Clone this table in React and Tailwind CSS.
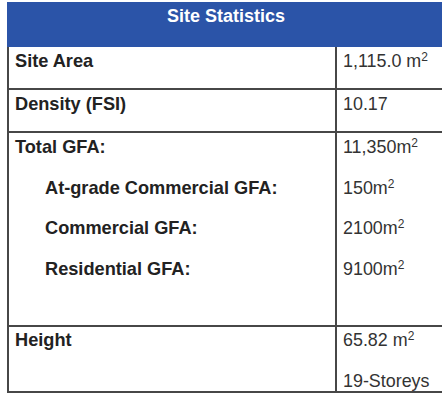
import React from 'react';

const M2 = ({ space }) => (
  <>
    {space ? ' ' : ''}m<sup className="text-[12px]">2</sup>
  </>
);

function Line({ children, bold, indent, last }) {
  return (
    <p
      className={
        'leading-[24.5px] whitespace-nowrap ' +
        (last ? '' : 'mb-[16px] ') +
        (bold ? 'font-bold text-[18.2px] text-[#222] ' : 'text-[17.9px] text-[#333] ') +
        (indent ? 'pl-[30px]' : '')
      }
    >
      {children}
    </p>
  );
}

function Row({ height, pt, left, right }) {
  return (
    <div className={'flex border-b-2 border-[#474747] ' + height}>
      <div className={'w-[326px] pl-[6px] ' + pt}>{left}</div>
      <div className={'flex-1 border-l-2 border-[#474747] pl-[6px] ' + pt}>{right}</div>
    </div>
  );
}

export default function App() {
  return (
    <div className="w-[442px] h-[401px] overflow-hidden bg-white font-['Liberation_Sans',Arial,sans-serif]">
      <div className="ml-[7px] mt-[2px] w-[438px]">
        {/* Header */}
        <div className="h-[45px] bg-[#2b54a8] pt-[2px] text-center text-[18px] font-bold text-white leading-[24.5px]">
          Site Statistics
        </div>

        {/* Body */}
        <div className="border-l-2 border-[#474747]">
          <Row
            height="h-[43px]"
            pt="pt-[2px]"
            left={<Line bold last>Site Area</Line>}
            right={<Line last>1,115.0<M2 space /></Line>}
          />
          <Row
            height="h-[43px]"
            pt="pt-[2px]"
            left={<Line bold last>Density (FSI)</Line>}
            right={<Line last>10.17</Line>}
          />
          <Row
            height="h-[194px]"
            pt="pt-[2px]"
            left={
              <>
                <Line bold>Total GFA:</Line>
                <Line bold indent>At-grade Commercial GFA:</Line>
                <Line bold indent>Commercial GFA:</Line>
                <Line bold indent last>Residential GFA:</Line>
              </>
            }
            right={
              <>
                <Line>11,350<M2 /></Line>
                <Line>150<M2 /></Line>
                <Line>2100<M2 /></Line>
                <Line last>9100<M2 /></Line>
              </>
            }
          />
          <Row
            height="h-[66px]"
            pt="pt-[1px]"
            left={<Line bold last>Height</Line>}
            right={
              <>
                <Line>65.82<M2 space /></Line>
                <Line last>19-Storeys</Line>
              </>
            }
          />
        </div>
      </div>
    </div>
  );
}
